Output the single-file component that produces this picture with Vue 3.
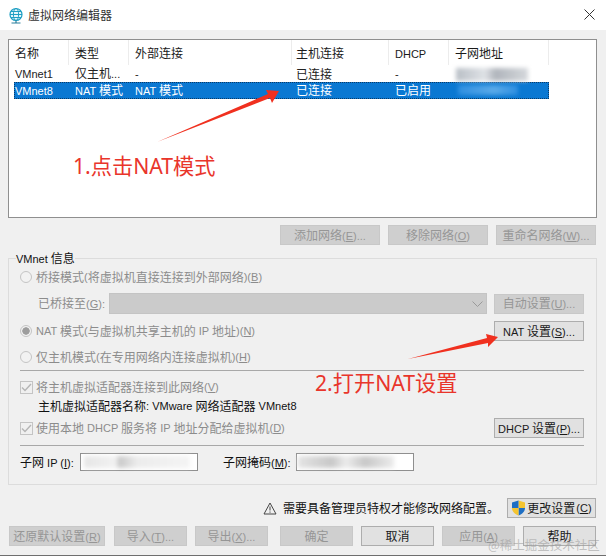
<script setup>
const columns = [
  { label: '名称', cls: 'c1' },
  { label: '类型', cls: 'c2' },
  { label: '外部连接', cls: 'c3' },
  { label: '主机连接', cls: 'c4' },
  { label: 'DHCP', cls: 'c5' },
  { label: '子网地址', cls: 'c6' }
]
const rows = [
  { cells: ['VMnet1', '仅主机...', '-', '已连接', '-', ''], selected: false },
  { cells: ['VMnet8', 'NAT 模式', 'NAT 模式', '已连接', '已启用', ''], selected: true }
]
const parts = (t) => t.split(/([A-Za-z0-9 .\-]+)/).filter(Boolean).map((s) => ({ s, lat: /^[A-Za-z0-9 .\-]+$/.test(s) }))
</script>

<template>
  <div class="win">
    <header class="title">
      <svg class="globe" width="16" height="18" viewBox="0 0 16 18">
        <circle cx="8" cy="7.500" r="6" fill="#e6f6fb" stroke="#1f9fc4" stroke-width="1.2" />
        <ellipse cx="8" cy="7.500" rx="2.600" ry="6" fill="none" stroke="#1f9fc4" />
        <path d="M2 7.500h12M3 4.500h10M3 10.500h10" stroke="#1f9fc4" fill="none" />
        <path d="M8 13.500v2M3.500 16h9" stroke="#2b7f9c" stroke-width="1.2" fill="none" />
      </svg>
      <span class="title-text">虚拟网络编辑器</span>
      <svg class="close" width="11" height="11" viewBox="0 0 11 11">
        <path d="M.5.5l10 10M10.500.5l-10 10" stroke="#333" fill="none" />
      </svg>
    </header>

    <main class="body">
      <section class="list">
        <div class="row head">
          <div v-for="c in columns" :key="c.label" class="cell" :class="c.cls">
            <span v-for="(p, k) in parts(c.label)" :key="k" :class="{ l: p.lat }">{{ p.s }}</span>
          </div>
        </div>
        <div v-for="r in rows" :key="r.cells[0]" class="row item" :class="{ selected: r.selected }">
          <div v-for="(t, i) in r.cells" :key="i" class="cell" :class="columns[i].cls">
            <span v-for="(p, k) in parts(t)" :key="k" :class="{ l: p.lat }">{{ p.s }}</span>
          </div>
        </div>
      </section>

      <div class="actions list-actions">
        <button class="btn dis w100" disabled>添加网络<span class="l">(<u>E</u>)...</span></button>
        <button class="btn dis w100" disabled>移除网络<span class="l">(<u>O</u>)</span></button>
        <button class="btn dis w100" disabled>重命名网络<span class="l">(<u>W</u>)...</span></button>
      </div>

      <fieldset class="group">
        <legend><span class="l">VMnet </span>信息</legend>

        <label class="line r1 muted"><i class="radio"></i>桥接模式<span class="l">(</span>将虚拟机直接连接到外部网络<span class="l">)(<u>B</u>)</span></label>
        <div class="line r2">
          <span class="bridge-label muted">已桥接至<span class="l">(<u>G</u>):</span></span>
          <div class="select">
            <svg width="11" height="6" viewBox="0 0 11 6"><path d="M.5.500l5 5 5-5" fill="none" stroke="#9a9a9a" /></svg>
          </div>
          <button class="btn dis w90" disabled>自动设置<span class="l">(<u>U</u>)...</span></button>
        </div>
        <div class="line r3">
          <label class="grow muted"><i class="radio on"></i><span class="l">NAT </span>模式<span class="l">(</span>与虚拟机共享主机的<span class="l"> IP </span>地址<span class="l">)(<u>N</u>)</span></label>
          <button class="btn w90"><span class="l">NAT </span>设置<span class="l">(<u>S</u>)...</span></button>
        </div>
        <label class="line r4 muted"><i class="radio"></i>仅主机模式<span class="l">(</span>在专用网络内连接虚拟机<span class="l">)(<u>H</u>)</span></label>

        <hr class="sep s1" />

        <label class="line r5 muted"><i class="check"><svg width="11" height="9" viewBox="0 0 11 9"><path d="M1 4.500l3 3 6-6.500" fill="none" stroke="#b5b5b5" stroke-width="1.4" /></svg></i>将主机虚拟适配器连接到此网络<span class="l">(<u>V</u>)</span></label>
        <div class="line r6 adapter">主机虚拟适配器名称<span class="l">: VMware </span>网络适配器<span class="l"> VMnet8</span></div>
        <div class="line r7">
          <label class="grow muted"><i class="check"><svg width="11" height="9" viewBox="0 0 11 9"><path d="M1 4.500l3 3 6-6.500" fill="none" stroke="#b5b5b5" stroke-width="1.4" /></svg></i>使用本地<span class="l"> DHCP </span>服务将<span class="l"> IP </span>地址分配给虚拟机<span class="l">(<u>D</u>)</span></label>
          <button class="btn w90"><span class="l">DHCP </span>设置<span class="l">(<u>P</u>)...</span></button>
        </div>

        <hr class="sep s2" />

        <div class="line r8">
          <span class="ip-label">子网<span class="l"> IP (<u>I</u>):</span></span>
          <div class="input"></div>
          <span class="mask-label">子网掩码<span class="l">(<u>M</u>):</span></span>
          <div class="input"></div>
        </div>
      </fieldset>

      <div class="notice">
        <svg width="14" height="13" viewBox="0 0 14 13">
          <path d="M7 1L13 12H1z" fill="none" stroke="#444" />
          <path d="M7 4.500v4M7 9.500v1.200" stroke="#444" fill="none" />
        </svg>
        <span class="notice-text">需要具备管理员特权才能修改网络配置。</span>
        <button class="btn change">
          <svg width="15" height="16" viewBox="0 0 15 16">
            <path d="M7.500.500L14 2.500V8H7.500z" fill="#f4c430" />
            <path d="M7.500.500L1 2.500V8h6.500z" fill="#1e6fc4" />
            <path d="M7.500 8H14c0 3.600-2.800 6-6.500 7.500z" fill="#1e6fc4" />
            <path d="M1 8h6.500v7.500C3.800 14 1 11.600 1 8z" fill="#f4c430" />
          </svg>更改设置<span class="l">(<u>C</u>)</span>
        </button>
      </div>

      <div class="actions bottom">
        <button class="btn dis w96" disabled>还原默认设置<span class="l">(<u>R</u>)</span></button>
        <button class="btn dis w73 nudge" disabled>导入<span class="l">(<u>T</u>)...</span></button>
        <button class="btn dis w73" disabled>导出<span class="l">(<u>X</u>)...</span></button>
        <button class="btn dis w73 gap-left" disabled>确定</button>
        <button class="btn w73">取消</button>
        <button class="btn dis w73" disabled>应用<span class="l">(<u>A</u>)</span></button>
        <button class="btn w73">帮助</button>
      </div>
    </main>

    <!-- blurred redactions -->
    <div class="blur b1"></div>
    <div class="blur b2"></div>
    <div class="blur b3"></div>
    <div class="blur b4"></div>

    <!-- hand-drawn annotations -->
    <svg class="marks" width="606" height="556" viewBox="0 0 606 556">
      <path d="M157 142 L268 94 L266 90 L279 91 L272 103 L270 98 Z" fill="#f0301f" />
      <path d="M408 359 L487 338 L486 334 L498 337 L488 347 L488 343 Z" fill="#f0301f" />
    </svg>
    <div class="note n1">1.点击NAT模式</div>
    <div class="note n2">2.打开NAT设置</div>
    <div class="mark">@稀土掘金技术社区</div>
  </div>
</template>

<style scoped>
.win {
  position: relative;
  width: 606px;
  height: 556px;
  overflow: hidden;
  background: #f0f0f0;
  color: #1a1a1a;
  font-family: "Noto Sans CJK SC", sans-serif;
  font-size: 12px;
  line-height: 16px;
  box-sizing: border-box;
  border-bottom: 1px solid #6e6e6e;
}
.l {
  font-family: "Liberation Sans", sans-serif;
  font-size: 11px;
}
.title {
  height: 30px;
  background: #fff;
  display: flex;
  align-items: center;
  padding: 0 8px;
}
.globe { margin-right: 4px; margin-top: 1px; }
.title-text { flex: 1; color: #333; }
.close { margin-right: 3px; margin-top: -2px; }
.body { padding: 9px 9px 0 8px; }
.list {
  height: 179px;
  box-sizing: border-box;
  background: #fff;
  border: 1px solid #8f8f8f;
  padding-left: 5px;
}
.row { display: flex; }
.head { height: 25px; align-items: center; }
.head .cell {
  height: 25px;
  line-height: 26px;
  border-right: 1px solid #ececec;
}
.item { height: 17px; line-height: 16px; align-items: center; }
.item .cell { color: #222; }
.cell {
  box-sizing: border-box;
  padding-left: 6px;
  white-space: nowrap;
  overflow: hidden;
}
.c1 { width: 55px; padding-left: 1px; }
.c2 { width: 60px; }
.c3 { width: 163px; }
.c4 { width: 97px; padding-left: 4px; }
.c5 { width: 60px; }
.c6 { width: 100px; }
.selected {
  height: 16.5px;
  background: #0a78d2;
  outline: 1px dotted #0a3a66;
  outline-offset: -1px;
  width: 535px;
}
.selected .cell { color: #fff; }
.actions { display: flex; }
.list-actions {
  justify-content: flex-end;
  gap: 8px;
  margin: 7px 1px 0 0;
}
.btn {
  height: 20px;
  padding: 0;
  box-sizing: border-box;
  background: #e1e1e1;
  border: 1px solid #adadad;
  color: #1a1a1a;
  font: inherit;
  line-height: 16px;
  white-space: nowrap;
}
.dis {
  background: #cfcfcf;
  border-color: #c8c8c8;
  color: #969696;
}
.w100 { width: 100px; }
.w90 { width: 90px; flex: none; }
.w96 { width: 96px; }
.w73 { width: 73px; }
.nudge { margin-left: 1px; }
.group {
  position: relative;
  height: 235px;
  box-sizing: border-box;
  margin: 5px 0 0;
  padding: 0;
  width: 589px;
  border: 1px solid #dcdcdc;
  min-inline-size: 0;
}
.group legend {
  margin-left: 7px;
  padding: 0;
  height: 16px;
  line-height: 16px;
  color: #111;
}
.line {
  display: flex;
  align-items: center;
  margin-left: 11px;
  margin-right: 12px;
}
.grow { flex: 1; display: flex; align-items: center; white-space: pre; }
.muted { color: #8c8c8c; }
label.line { white-space: pre; }
.radio {
  display: inline-block;
  width: 12px;
  height: 12px;
  box-sizing: border-box;
  border: 1px solid #c4c4c4;
  border-radius: 50%;
  background: #f2f2f2;
  margin-right: 4px;
  flex: none;
}
.radio.on { background: radial-gradient(circle, #9d9d9d 0 3.400px, #f2f2f2 4px); }
.check {
  display: inline-flex;
  align-items: center;
  justify-content: center;
  width: 13px;
  height: 13px;
  box-sizing: border-box;
  border: 1px solid #c4c4c4;
  margin-right: 3px;
  flex: none;
}
.r1 { height: 16px; margin-top: 3px; }
.r2 { height: 21px; margin-top: 8px; }
.bridge-label { margin-left: 18px; width: 71px; flex: none; white-space: nowrap; }
.select {
  flex: 1;
  height: 21px;
  box-sizing: border-box;
  background: #cbcbcb;
  border: 1px solid #c4c4c4;
  margin-right: 7px;
  display: flex;
  align-items: center;
  justify-content: flex-end;
  padding-right: 3px;
}
.r3 { height: 20px; margin-top: 7px; }
.r4 { height: 16px; margin-top: 8px; }
.sep { height: 1px; border: 0; background: #a8a8a8; margin: 5px 12px 0 11px; }
.r5 { height: 16px; margin-top: 8px; }
.r6 { height: 16px; margin-top: 3px; margin-left: 29px; color: #111; white-space: pre; }
.r7 { height: 20px; margin-top: 4px; }
.s2 { margin-top: 7px; }
.r8 { height: 18px; margin-top: 7px; color: #111; }
.ip-label { width: 60px; flex: none; white-space: pre; }
.mask-label { margin-left: 25px; width: 73px; flex: none; white-space: nowrap; }
.input {
  width: 118px;
  height: 18px;
  box-sizing: border-box;
  background: #fff;
  border: 1px solid #8f8f8f;
}
.notice {
  display: flex;
  align-items: center;
  justify-content: flex-end;
  margin: 13px 1px 0 0;
  height: 20px;
}
.notice-text { margin-left: 6px; margin-right: 8px; color: #111; }
.change {
  width: 89px;
  display: flex;
  align-items: center;
  justify-content: center;
  gap: 1px;
}
.bottom { gap: 8px; margin-top: 8px; margin-left: 1px; }
.gap-left { margin-left: 4px; }
.blur { position: absolute; filter: blur(2px); }
.b1 { left: 456px; top: 68px; width: 72px; height: 13px; background: linear-gradient(90deg, #b9bfc6, #dfe2e6 40%, #b0b5bc 55%, #d5d8dc); }
.b2 { left: 458px; top: 85px; width: 60px; height: 10px; background: linear-gradient(90deg, #2f8fe0, #5aaae8 60%, #2f8fe0); }
.b3 { left: 84px; top: 456px; width: 106px; height: 12px; background: linear-gradient(90deg, #e6e6e6, #f2f2f2 30%, #c8c8c8 33%, #ececec 50%, #f4f4f4); }
.b4 { left: 298px; top: 456px; width: 96px; height: 12px; background: linear-gradient(90deg, #e4e4e4, #c8c8c8 35%, #ececec 50%, #c8c8c8 70%, #ececec); }
.marks { position: absolute; left: 0; top: 0; pointer-events: none; }
.note {
  position: absolute;
  color: #e9352b;
  font-family: "Noto Sans", "Noto Sans CJK SC", sans-serif;
  font-size: 21.200px;
  line-height: 24px;
  white-space: nowrap;
}
.n1 { left: 73px; top: 154px; }
.n2 { left: 315px; top: 371px; }
.mark {
  position: absolute;
  left: 488px;
  top: 537px;
  font-size: 12.500px;
  line-height: 16px;
  color: rgba(150, 150, 150, 0.55);
  white-space: nowrap;
}
</style>

<style>
html, body { margin: 0; padding: 0; background: #f0f0f0; }
</style>
